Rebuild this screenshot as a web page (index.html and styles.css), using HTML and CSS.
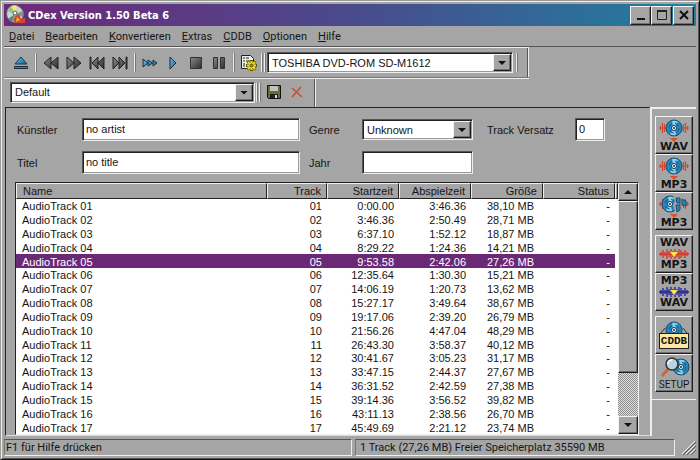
FILE: index.html
```html
<!DOCTYPE html>
<html lang="de">
<head>
<meta charset="utf-8">
<title>CDex Version 1.50 Beta 6</title>
<link rel="stylesheet" href="styles.css">
</head>
<body>
<svg class="defs" aria-hidden="true">
  <defs>
    <linearGradient id="dark" x1="0" y1="0" x2="1" y2="1"><stop offset="0" stop-color="#8a8a8a"/><stop offset="1" stop-color="#2c2c2c"/></linearGradient>
    <linearGradient id="blue" x1="0" y1="0" x2="1" y2="1"><stop offset="0" stop-color="#6cc4ea"/><stop offset="1" stop-color="#14608f"/></linearGradient>
    <g id="disc">
      <circle cx="0" cy="0" r="8" fill="#2388bd" stroke="#1c4a68" stroke-width="1"/>
      <path d="M-2-7A7 7 0 0 1 4-6L1-2H-1Z M2 7A7 7 0 0 1-4 6L-1 2H1Z" fill="#8bd3f0"/>
      <circle cx="0" cy="0" r="5" fill="none" stroke="#12587f" stroke-dasharray="5 3"/>
      <circle cx="0" cy="0" r="2.5" fill="#fff" stroke="#123a55"/>
      <circle cx="0" cy="0" r="1" fill="#222"/>
    </g>
    <path id="wave" d="M-15 0H15M-13.500-2V2M-11.500-5V5M-9.500-4V4M9.500-4V4M11.500-5V5M13.500-2V2" fill="none" stroke="#d8452c" stroke-width="1.200"/>
    <path id="burst" d="M-15 0H15M-13-2V2M-11-4V4M-9-2V2M-7-5V5M-5-3V3M-3-5V5M-1-3V3M1-5V5M3-3V3M5-5V5M7-4V4M9-2V2M11-4V4M13-2V2" fill="none" stroke-width="1.4"/>
  </defs>
</svg>
<div class="window">
  <header class="titlebar">
    <svg class="logo" viewBox="0 0 20 20" aria-hidden="true">
      <circle cx="9" cy="9" r="8.5" fill="#c9d5cf" stroke="#59665f"/>
      <path d="M9 9L5 1A9 9 0 0 1 11 .5Z" fill="#f3ed6a"/><path d="M9 9L1 6A9 9 0 0 1 5 1Z" fill="#9bbf95"/>
      <path d="M9 9L17 6A9 9 0 0 1 17 12Z" fill="#7b9b8c"/><path d="M9 9L2 14A9 9 0 0 0 6 17Z" fill="#4d8f70"/>
      <circle cx="9" cy="8" r="2" fill="#fff" stroke="#555"/>
      <path d="M9 11L13 9L15 14L19 13V18H9L7 15Z" fill="#d4482d"/><path d="M11 12l3 3l-4 2z" fill="#f0b42e"/>
    </svg>
    <h1>CDex Version 1.50 Beta 6</h1>
    <button class="raised cap" aria-label="Minimieren"><svg viewBox="0 0 16 14"><path d="M4 10h8v2H4z" fill="#111"/></svg></button>
    <button class="raised cap" aria-label="Maximieren"><svg viewBox="0 0 16 14"><path d="M3.500 2.500h9v9h-9z" fill="none" stroke="#222"/><path d="M3 2h10v2H3z" fill="#222"/></svg></button>
    <button class="raised cap close" aria-label="Schließen"><svg viewBox="0 0 16 14"><path d="M4 3L12 11M12 3L4 11" stroke="#111" stroke-width="2"/></svg></button>
  </header>
  <nav class="menu">
    <a href="#"><u>D</u>atei</a><a href="#"><u>B</u>earbeiten</a><a href="#"><u>K</u>onvertieren</a><a href="#"><u>E</u>xtras</a><a href="#"><u>C</u>DDB</a><a href="#"><u>O</u>ptionen</a><a href="#"><u>H</u>ilfe</a>
  </nav>
  <div class="bar drivebar">
    <button class="tool" aria-label="Auswerfen"><svg viewBox="0 0 16 16"><path d="M8 2L14 9H2Z" fill="url(#blue)" stroke="#183a50"/><path d="M1.500 11.500h13v2h-13z" fill="#2388bd" stroke="#16303f"/></svg></button>
    <span class="sep"></span>
    <button class="tool" aria-label="Zurückspulen"><svg viewBox="0 0 16 16"><path d="M8 2V14L1 8ZM15 2V14L8 8Z" fill="url(#dark)" stroke="#222"/></svg></button>
    <button class="tool" aria-label="Vorspulen"><svg viewBox="0 0 16 16"><path d="M1 2V14L8 8ZM8 2V14L15 8Z" fill="url(#dark)" stroke="#222"/></svg></button>
    <button class="tool" aria-label="Voriger Track"><svg viewBox="0 0 16 16"><path d="M1 2H2V14H1ZM9 2V14L3 8ZM15 2V14L9 8Z" fill="url(#dark)" stroke="#222"/></svg></button>
    <button class="tool" aria-label="Nächster Track"><svg viewBox="0 0 16 16"><path d="M1 2V14L7 8ZM7 2V14L13 8ZM14 2H15V14H14Z" fill="url(#dark)" stroke="#222"/></svg></button>
    <span class="sep"></span>
    <button class="tool" aria-label="Anspielen"><svg viewBox="0 0 16 16"><path d="M1 4V12L6 8ZM6 5V11L10.500 8ZM11 5V11L15 8Z" fill="url(#blue)" stroke="#16303f"/></svg></button>
    <button class="tool" aria-label="Abspielen"><svg viewBox="0 0 16 16"><path d="M5 2V14L11 8Z" fill="url(#blue)" stroke="#16303f"/></svg></button>
    <button class="tool" aria-label="Stopp"><svg viewBox="0 0 16 16"><path d="M2.500 2.500h11v11h-11z" fill="url(#dark)" stroke="#333"/></svg></button>
    <button class="tool" aria-label="Pause"><svg viewBox="0 0 16 16"><path d="M2.500 2.500h4v11h-4zM9.500 2.500h4v11h-4z" fill="url(#dark)" stroke="#333"/></svg></button>
    <span class="sep"></span>
    <button class="tool" aria-label="Einstellungen"><svg viewBox="0 0 16 16"><path d="M.5.500h9l3 3v10H.5z" fill="#eee" stroke="#222"/><path d="M2 3h2M5 3h3M2 6h2M5 6h5M2 9h2M2 11h2" stroke="#222"/><path d="M10.500 5v11M5 10.500h11M6.500 6.500l8 8M14.500 6.500l-8 8" stroke="#5b5300" stroke-width="3"/><path d="M10.500 6v9M6 10.500h9M7 7l7 7M14 7l-7 7" stroke="#f0dc1c" stroke-width="2"/><circle cx="10.500" cy="10.500" r="1.500" fill="#888" stroke="#5b5300"/></svg></button>
    <span class="sep double"></span>
    <span class="combo drive"><select aria-label="Laufwerk"><option>TOSHIBA DVD-ROM SD-M1612</option></select><span class="raised drop"></span></span>
    <span class="sep"></span>
  </div>
  <div class="rule"></div>
  <div class="bar profilebar">
    <span class="combo profile"><select aria-label="Profil"><option>Default</option></select><span class="raised drop"></span></span>
    <span class="sep double"></span>
    <button class="tool" aria-label="Speichern"><svg viewBox="0 0 16 16"><path d="M1.500 1.500h13v13h-12l-1-1z" fill="#6b6a3a" stroke="#111"/><path d="M4 2h8v5H4z" fill="#c4c4bc"/><path d="M4 10h8v4H4z" fill="#222"/><path d="M9 11h2v3H9z" fill="#ddd"/></svg></button>
    <button class="tool" aria-label="Löschen"><svg viewBox="0 0 16 16"><path d="M3 4L13 13M12 3L3 13" stroke="#cb4a30" stroke-width="1.500"/></svg></button>
  </div>
  <div class="work">
    <main class="pane">
      <form class="fields">
        <label for="artist">Künstler</label><input id="artist" value="no artist">
        <label for="genre">Genre</label><span class="combo"><select id="genre"><option>Unknown</option></select><span class="raised drop"></span></span>
        <label for="offset">Track Versatz</label><input id="offset" value="0">
        <label for="album">Titel</label><input id="album" value="no title">
        <label for="year">Jahr</label><input id="year" value="">
      </form>
      <div class="list">
        <table>
          <colgroup><col><col class="narrow"><col class="mid"><col class="mid"><col class="mid"><col class="mid"><col class="rest"></colgroup>
          <thead><tr><th>Name</th><th>Track</th><th>Startzeit</th><th>Abspielzeit</th><th>Größe</th><th>Status</th><th></th></tr></thead>
          <tbody>
            <tr><td>AudioTrack 01</td><td>01</td><td>0:00.00</td><td>3:46.36</td><td>38,10 MB</td><td>-</td><td></td></tr>
            <tr><td>AudioTrack 02</td><td>02</td><td>3:46.36</td><td>2:50.49</td><td>28,71 MB</td><td>-</td><td></td></tr>
            <tr><td>AudioTrack 03</td><td>03</td><td>6:37.10</td><td>1:52.12</td><td>18,87 MB</td><td>-</td><td></td></tr>
            <tr><td>AudioTrack 04</td><td>04</td><td>8:29.22</td><td>1:24.36</td><td>14,21 MB</td><td>-</td><td></td></tr>
            <tr class="selected"><td>AudioTrack 05</td><td>05</td><td>9:53.58</td><td>2:42.06</td><td>27,26 MB</td><td>-</td><td></td></tr>
            <tr><td>AudioTrack 06</td><td>06</td><td>12:35.64</td><td>1:30.30</td><td>15,21 MB</td><td>-</td><td></td></tr>
            <tr><td>AudioTrack 07</td><td>07</td><td>14:06.19</td><td>1:20.73</td><td>13,62 MB</td><td>-</td><td></td></tr>
            <tr><td>AudioTrack 08</td><td>08</td><td>15:27.17</td><td>3:49.64</td><td>38,67 MB</td><td>-</td><td></td></tr>
            <tr><td>AudioTrack 09</td><td>09</td><td>19:17.06</td><td>2:39.20</td><td>26,79 MB</td><td>-</td><td></td></tr>
            <tr><td>AudioTrack 10</td><td>10</td><td>21:56.26</td><td>4:47.04</td><td>48,29 MB</td><td>-</td><td></td></tr>
            <tr><td>AudioTrack 11</td><td>11</td><td>26:43.30</td><td>3:58.37</td><td>40,12 MB</td><td>-</td><td></td></tr>
            <tr><td>AudioTrack 12</td><td>12</td><td>30:41.67</td><td>3:05.23</td><td>31,17 MB</td><td>-</td><td></td></tr>
            <tr><td>AudioTrack 13</td><td>13</td><td>33:47.15</td><td>2:44.37</td><td>27,67 MB</td><td>-</td><td></td></tr>
            <tr><td>AudioTrack 14</td><td>14</td><td>36:31.52</td><td>2:42.59</td><td>27,38 MB</td><td>-</td><td></td></tr>
            <tr><td>AudioTrack 15</td><td>15</td><td>39:14.36</td><td>3:56.52</td><td>39,82 MB</td><td>-</td><td></td></tr>
            <tr><td>AudioTrack 16</td><td>16</td><td>43:11.13</td><td>2:38.56</td><td>26,70 MB</td><td>-</td><td></td></tr>
            <tr><td>AudioTrack 17</td><td>17</td><td>45:49.69</td><td>2:21.12</td><td>23,74 MB</td><td>-</td><td></td></tr>
          </tbody>
        </table>
        <div class="scroll">
          <button class="raised arrow up" aria-label="Nach oben"></button>
          <div class="raised thumb"></div>
          <button class="raised arrow down" aria-label="Nach unten"></button>
        </div>
      </div>
    </main>
    <aside class="side">
      <div class="rail">
        <div class="group">
          <button class="raised big"><svg viewBox="0 0 34 23"><use href="#wave" x="17" y="9"/><use href="#disc" x="17" y="9"/><path d="M13 19h8l-4 4z" fill="#dd4f24"/></svg><span>WAV</span></button>
          <button class="raised big"><svg viewBox="0 0 34 23"><use href="#wave" x="17" y="9"/><use href="#disc" x="17" y="9"/><path d="M13 19h8l-4 4z" fill="#dd4f24"/></svg><span>MP3</span></button>
          <button class="raised big"><svg viewBox="0 0 34 23"><use href="#wave" x="17" y="9"/><use href="#disc" x="13" y="9"/><path d="M16 1l2 5l-2 4l2 7l4-1V1z" fill="#a5a5a5"/><path d="M19 3h4v5h-3zM25 4l4 2v5l-4-1zM19 10h4v5l-3 2z" fill="#2388bd" stroke="#1c4a68"/><path d="M13 19h8l-4 4z" fill="#dd4f24"/></svg><span>MP3</span></button>
        </div>
        <div class="group">
          <button class="raised big"><span>WAV</span><svg class="thin" viewBox="0 0 34 12"><use href="#burst" x="17" y="6" stroke="#d8382a"/><path d="M13 4h8l-4 5z" fill="#ffe14a"/></svg><span>MP3</span></button>
          <button class="raised big"><span>MP3</span><svg class="thin" viewBox="0 0 34 12"><use href="#burst" x="17" y="6" stroke="#252a9c"/><path d="M13 4h8l-4 5z" fill="#ffe14a"/></svg><span>WAV</span></button>
        </div>
        <div class="group">
          <button class="raised big"><svg class="dome" viewBox="0 0 34 12"><use href="#disc" x="17" y="9"/><path d="M4 12L8 7M30 12L26 7" stroke="#333"/></svg><span class="plate">CDDB</span></button>
          <button class="raised big"><svg viewBox="0 0 34 23"><use href="#disc" x="24" y="11"/><path d="M12 12L5 20" stroke="#c66a32" stroke-width="3"/><circle cx="15" cy="8" r="6" fill="#b9d3df" stroke="#333" stroke-width="1.500"/><path d="M11 8a4 4 0 0 1 4-4" stroke="#fff" fill="none" stroke-width="1.500"/></svg><span class="slim">SETUP</span></button>
        </div>
      </div>
    </aside>
  </div>
  <footer class="status">
    <span class="cell help">F1 für Hilfe drücken</span><span class="cell info">1 Track (27,26 MB) Freier Speicherplatz 35590 MB</span>
    <svg class="grip" viewBox="0 0 16 16" aria-hidden="true"><path d="M2 15L15 2M6 15L15 6M10 15L15 10" stroke="#eee"/><path d="M3 16L16 3M7 16L16 7M11 16L16 11" stroke="#555"/></svg>
  </footer>
</div>
</body>
</html>
```
FILE: styles.css
```css
* { box-sizing: border-box; }

body {
  margin: 0;
  background: #a5a5a5;
  color: #151515;
  font: 11px/14px "Liberation Sans", Arial, sans-serif;
}

button, input, select { font: inherit; color: inherit; padding: 0; margin: 0; border-radius: 0; }
.defs { position: absolute; width: 0; height: 0; }

.window {
  display: flex;
  flex-direction: column;
  min-height: 100vh;
  padding: 3px;
  background: #a5a5a5;
  border: 1px solid;
  border-color: #999 #111 #111 #999;
  box-shadow: inset 1px 1px #eee, inset -1px -1px #555;
}

.raised {
  background: #a5a5a5;
  border: 1px solid;
  border-color: #f4f4f4 #1c1c1c #1c1c1c #f4f4f4;
  box-shadow: inset -1px -1px #707070;
}

/* Title bar */
.titlebar {
  display: flex;
  align-items: center;
  height: 22px;
  padding: 0 2px;
  background: linear-gradient(90deg, #70287a, #4a4a8c 50%, #2080a0);
  color: #fff;
}
.logo { width: 20px; height: 20px; }
.titlebar h1 {
  flex: 1;
  margin: 2px 0 0 2px;
  font: bold 11px/14px "DejaVu Sans Condensed", "DejaVu Sans", sans-serif;
}
.cap { width: 21px; height: 19px; }
.cap svg { display: block; width: 16px; height: 14px; margin: 0 auto; }
.close { margin-left: 1px; }

/* Menu */
.menu {
  display: flex;
  gap: 11px;
  height: 21px;
  padding: 4px 5px;
  border-bottom: 1px solid #555;
  font-family: Roboto, sans-serif;
  line-height: 13px;
}
.menu a { color: inherit; text-decoration: none; }

/* Toolbars */
.bar {
  display: flex;
  align-items: center;
  align-self: flex-start;
  border-right: 1px solid #eee;
  box-shadow: inset -1px 0 #555;
}
.drivebar { height: 30px; padding: 0 8px 0 5px; border-top: 1px solid #eee; }
.profilebar { height: 28px; padding: 0 7px 2px 6px; }
.rule { width: 525px; height: 2px; background: #eee; border-top: 1px solid #777; }
.tool { width: 23px; height: 22px; border: 0; background: none; }
.tool svg { display: block; width: 16px; height: 16px; margin: 0 auto; }
.sep { width: 3px; height: 19px; margin: 0 2px; background: #eee; border-right: 1px solid #777; border-left: 1px solid #999; }
.double { width: 5px; margin: 0 1px; border: 0; background: linear-gradient(90deg, #eee 1px, #777 1px 2px, #a5a5a5 2px 3px, #eee 3px 4px, #777 4px); }

/* Fields */
input, .combo {
  background: #fff;
  border: 1px solid;
  border-color: #555 #eee #eee #555;
  box-shadow: inset 1px 1px #222, inset -1px -1px #999;
}
input { width: 100%; height: 23px; padding: 0 3px 2px; outline: 0; }
.combo { position: relative; display: block; height: 21px; }
.combo select {
  width: 100%;
  height: 19px;
  padding: 0 22px 0 4px;
  border: 0;
  background: none;
  appearance: none;
  outline: 0;
}
.drop { position: absolute; top: 1px; right: 1px; width: 18px; height: 17px; pointer-events: none; }
.drop::after, .arrow::after {
  content: "";
  display: block;
  width: 8px;
  height: 4px;
  margin: 6px auto;
  background: #111;
  clip-path: polygon(0 0, 100% 0, 50% 100%);
}
.up::after { clip-path: polygon(0 100%, 100% 100%, 50% 0); }
.drive { width: 246px; }
.profile { width: 245px; }

/* Work area */
.work { display: flex; flex: 1; }
.pane {
  display: flex;
  flex: 1;
  flex-direction: column;
  gap: 8px;
  padding: 10px 10px 0 9px;
  border: 1px solid;
  border-color: #222 #a5a5a5 #ddd #222;
  margin-left: 1px;
}
.fields {
  display: grid;
  grid-template-columns: 59px minmax(100px, 218px) 50px 111px 90px 30px;
  gap: 10px 6px;
  align-items: center;
  padding-left: 2px;
}
.fields label:nth-of-type(2), .fields label:nth-of-type(5) { padding-left: 3px; }
.fields label:nth-of-type(3) { padding-left: 8px; }

.list {
  display: flex;
  flex: 1;
  background: #fff;
  border: 1px solid;
  border-color: #222 #eee #eee #222;
}
table { flex: 1; border-collapse: separate; border-spacing: 0; table-layout: fixed; }
.narrow { width: 60px; }
.mid { width: 72px; }
.rest { width: 3px; }
th {
  height: 16px;
  padding: 0 5px 0 6px;
  background: #a5a5a5;
  border: 1px solid;
  border-color: #eee #222 #222 #eee;
  font-weight: normal;
  line-height: 14px;
  text-align: right;
}
td { padding: 1px 5px 0; line-height: 12px; text-align: right; white-space: nowrap; }
td:nth-child(5) { padding-right: 9px; }
th:first-child, td:first-child { padding-left: 6px; text-align: left; }
th:last-child, td:last-child { padding: 0; }
.selected td { background: #6b2876; color: #fff; }
.selected td:last-child { background: none; }

.scroll {
  display: flex;
  flex-direction: column;
  width: 20px;
  background: repeating-conic-gradient(#888 0 25%, #e4e4e4 0 50%) 0 0 / 2px 2px;
}
.arrow { height: 18px; }
.arrow::after { margin: 0 auto; }
.thumb { height: 172px; }
.down { margin-top: auto; }

/* Side buttons */
.side { width: 46px; border-left: 2px solid #eee; border-top: 2px solid #eee; }
.rail { display: flex; flex-direction: column; gap: 5px; padding: 7px 0 7px 3px; border-bottom: 1px solid #eee; }
.big {
  display: flex;
  flex-direction: column;
  align-items: center;
  justify-content: center;
  width: 38px;
  height: 38px;
  font: bold 11px/10px "DejaVu Sans", sans-serif;
}
.big svg { width: 34px; height: 23px; }
.big .thin { height: 12px; }
.big .dome { height: 12px; }
.plate { padding: 1px; border: 1px solid #222; background: #ffe9a0; font: bold 11px/12px "Liberation Mono", monospace; }
.slim { font: 10px/11px Roboto, sans-serif; }

/* Status bar */
.status {
  display: flex;
  align-items: stretch;
  gap: 3px;
  height: 17px;
  margin-top: 3px;
  font-family: Roboto, sans-serif;
}
.cell { padding: 0 1px; border: 1px solid; border-color: #555 #eee #eee #777; line-height: 15px; white-space: nowrap; }
.help { flex: 1; }
.info { width: 320px; padding-left: 4px; }
.grip { width: 16px; height: 16px; margin-left: 2px; }
```
